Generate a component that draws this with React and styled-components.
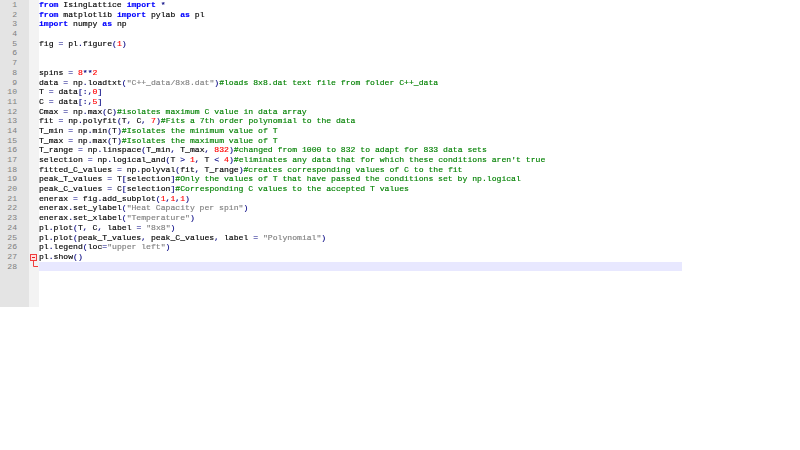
import styled, { createGlobalStyle } from "styled-components";

const source = [
  "from IsingLattice import *",
  "from matplotlib import pylab as pl",
  "import numpy as np",
  "",
  "fig = pl.figure(1)",
  "",
  "",
  "spins = 8**2",
  'data = np.loadtxt("C++_data/8x8.dat")#loads 8x8.dat text file from folder C++_data',
  "T = data[:,0]",
  "C = data[:,5]",
  "Cmax = np.max(C)#isolates maximum C value in data array",
  "fit = np.polyfit(T, C, 7)#Fits a 7th order polynomial to the data",
  "T_min = np.min(T)#Isolates the minimum value of T",
  "T_max = np.max(T)#Isolates the maximum value of T",
  "T_range = np.linspace(T_min, T_max, 832)#changed from 1000 to 832 to adapt for 833 data sets",
  "selection = np.logical_and(T > 1, T < 4)#eliminates any data that for which these conditions aren't true",
  "fitted_C_values = np.polyval(fit, T_range)#creates corresponding values of C to the fit",
  "peak_T_values = T[selection]#Only the values of T that have passed the conditions set by np.logical",
  "peak_C_values = C[selection]#Corresponding C values to the accepted T values",
  "enerax = fig.add_subplot(1,1,1)",
  'enerax.set_ylabel("Heat Capacity per spin")',
  'enerax.set_xlabel("Temperature")',
  'pl.plot(T, C, label = "8x8")',
  'pl.plot(peak_T_values, peak_C_values, label = "Polynomial")',
  'pl.legend(loc="upper left")',
  "pl.show()",
  "",
];

const tokenPattern = /(#.*$)|("[^"]*")|\b(from|import|as)\b|\b(\d+)\b|([=*+\-<>()[\]:,.]+)|([^#"=*+\-<>()[\]:,.]+?(?=\b|[#"=*+\-<>()[\]:,.]|$))/g;

const tokenize = (line) => {
  const tokens = [];
  for (const m of line.matchAll(tokenPattern)) {
    let kind = "plain";
    if (m[1]) kind = "comment";
    else if (m[2]) kind = "string";
    else if (m[3]) kind = "keyword";
    else if (m[4]) kind = "number";
    else if (m[5]) kind = "operator";
    tokens.push({ text: m[0], kind });
  }
  return tokens;
};

const tokenColors = {
  plain: "#000000",
  comment: "#008000",
  string: "#808080",
  keyword: "#0000ff",
  number: "#ff0000",
  operator: "#000080",
};

const GlobalStyle = createGlobalStyle`
  html, body {
    margin: 0;
    padding: 0;
    background: #ffffff;
  }
`;

const Editor = styled.div`
  display: flex;
  width: 800px;
  height: 450px;
  align-items: flex-start;
  font-family: "Liberation Mono", monospace;
  font-size: 8.12px;
  line-height: 9.7px;
`;

const Gutter = styled.div`
  width: 29px;
  height: 307px;
  background: #e4e4e4;
  color: #808080;
  text-align: right;
  box-sizing: border-box;
  padding-right: 12px;
`;

const LineNumber = styled.div`
  height: 9.7px;
`;

const FoldMargin = styled.div`
  width: 10px;
  height: 307px;
  background: #f3f3f3;
  box-sizing: border-box;
  padding-top: 254px;
`;

const FoldIcon = styled.svg`
  display: block;
`;

const Code = styled.div`
  width: 643px;
  filter: blur(0.3px);
`;

const Line = styled.div`
  height: 9.7px;
  white-space: pre;
  background: ${(p) => (p.$active ? "#e8e8ff" : "transparent")};
`;

const Token = styled.span`
  color: ${(p) => tokenColors[p.$kind]};
  font-weight: ${(p) => (p.$kind === "keyword" ? 700 : 400)};
  -webkit-text-stroke: 0.15px ${(p) => tokenColors[p.$kind]};
`;

const App = () => {
  return (
    <>
      <GlobalStyle />
      <Editor>
        <Gutter>
          {source.map((_, i) => (
            <LineNumber key={i}>{i + 1}</LineNumber>
          ))}
        </Gutter>
        <FoldMargin>
          <FoldIcon width="10" height="16" viewBox="0 0 10 16">
            <rect x="1.5" y="0.5" width="6" height="6" fill="#ffe0e0" stroke="#f03c3c" />
            <path d="M3 3.5h3" stroke="#e02020" fill="none" />
            <path d="M4.5 7v5.5H9" stroke="#f03c3c" fill="none" />
          </FoldIcon>
        </FoldMargin>
        <Code>
          {source.map((line, i) => (
            <Line key={i} $active={i === source.length - 1}>
              {tokenize(line).map((t, j) => (
                <Token key={j} $kind={t.kind}>
                  {t.text}
                </Token>
              ))}
            </Line>
          ))}
        </Code>
      </Editor>
    </>
  );
};

export default App;
